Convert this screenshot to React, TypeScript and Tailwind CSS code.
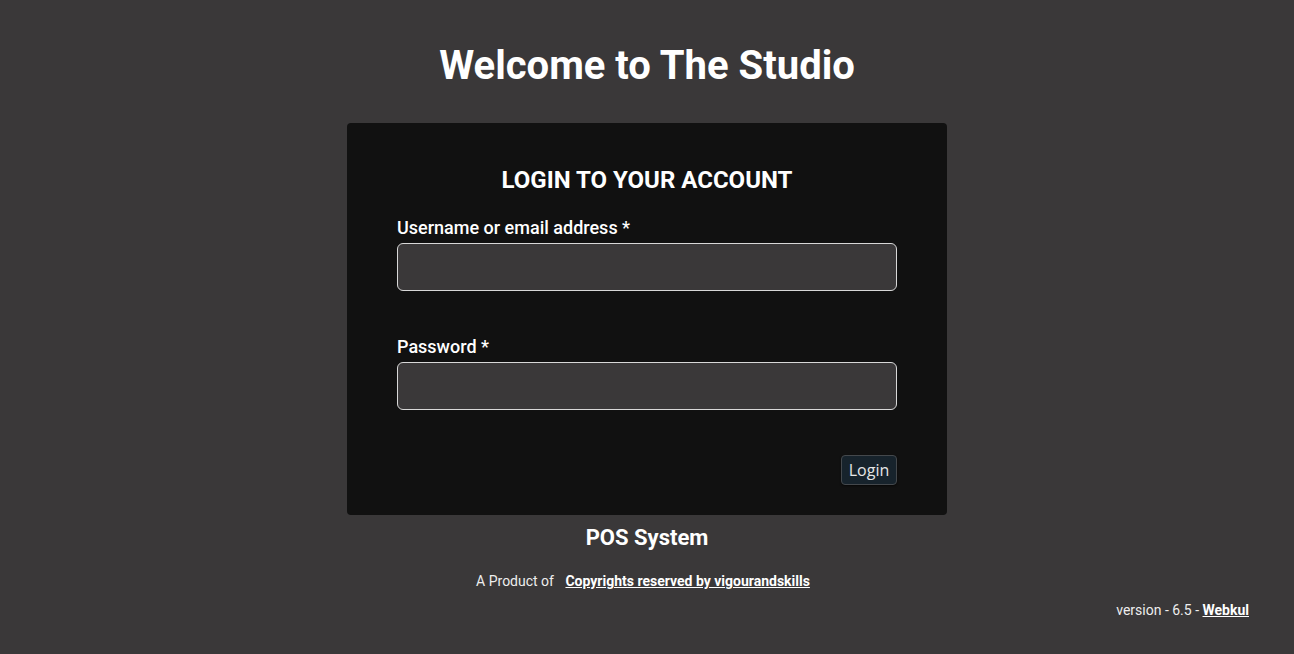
import React from "react";

export default function App() {
  return (
    <div
      className="min-h-[654px] w-full bg-[#3a3839] text-white flex flex-col items-center"
      style={{ fontFamily: "Roboto, 'Liberation Sans', sans-serif" }}
    >
      <h1 className="mt-[41px] h-[50px] text-[40px] leading-[50px] font-bold text-center">
        Welcome to The Studio
      </h1>
      <div className="mt-[32px] w-[600px] h-[392px] bg-[#111111] rounded-[4px] px-[50px] flex flex-col">
        <h2 className="mt-[42px] text-[24px] leading-[30px] font-bold text-center">LOGIN TO YOUR ACCOUNT</h2>
        <label className="mt-[20px] text-[18px] leading-[26px] font-medium">Username or email address *</label>
        <input className="mt-[2px] h-[48px] w-full bg-[#3a3839] border border-[#d8d8d8] rounded-[6px] outline-none px-3 text-white" />
        <label className="mt-[43px] text-[18px] leading-[26px] font-medium">Password *</label>
        <input type="password" className="mt-[2px] h-[48px] w-full bg-[#3a3839] border border-[#d8d8d8] rounded-[6px] outline-none px-3 text-white" />
        <div className="mt-[45px] flex justify-end">
          <button
            className="h-[30px] w-[56px] bg-[#17232c] border border-[#44484c] rounded-[4px] text-[16px] text-[#e6e6e6] shadow-[0_1px_2px_rgba(0,0,0,0.6)]"
            style={{ fontFamily: "'Open Sans', sans-serif" }}
          >
            Login
          </button>
        </div>
      </div>
      <div className="mt-[10px] text-[22px] leading-[26px] font-bold">POS System</div>
      <div className="mt-[20px] text-[14px] leading-[20px] text-[#eeeeee] pr-[8px]">
        A Product of{" "}
        <a className="ml-[8px] font-bold underline text-white" href="#">
          Copyrights reserved by vigourandskills
        </a>
      </div>
      <div className="w-full flex justify-end pr-[45px] mt-[9px] text-[14px] leading-[20px] text-[#eeeeee]">
        <span>
          version - 6.5 -{" "}
          <a className="font-bold underline text-white" href="#">
            Webkul
          </a>
        </span>
      </div>
    </div>
  );
}
